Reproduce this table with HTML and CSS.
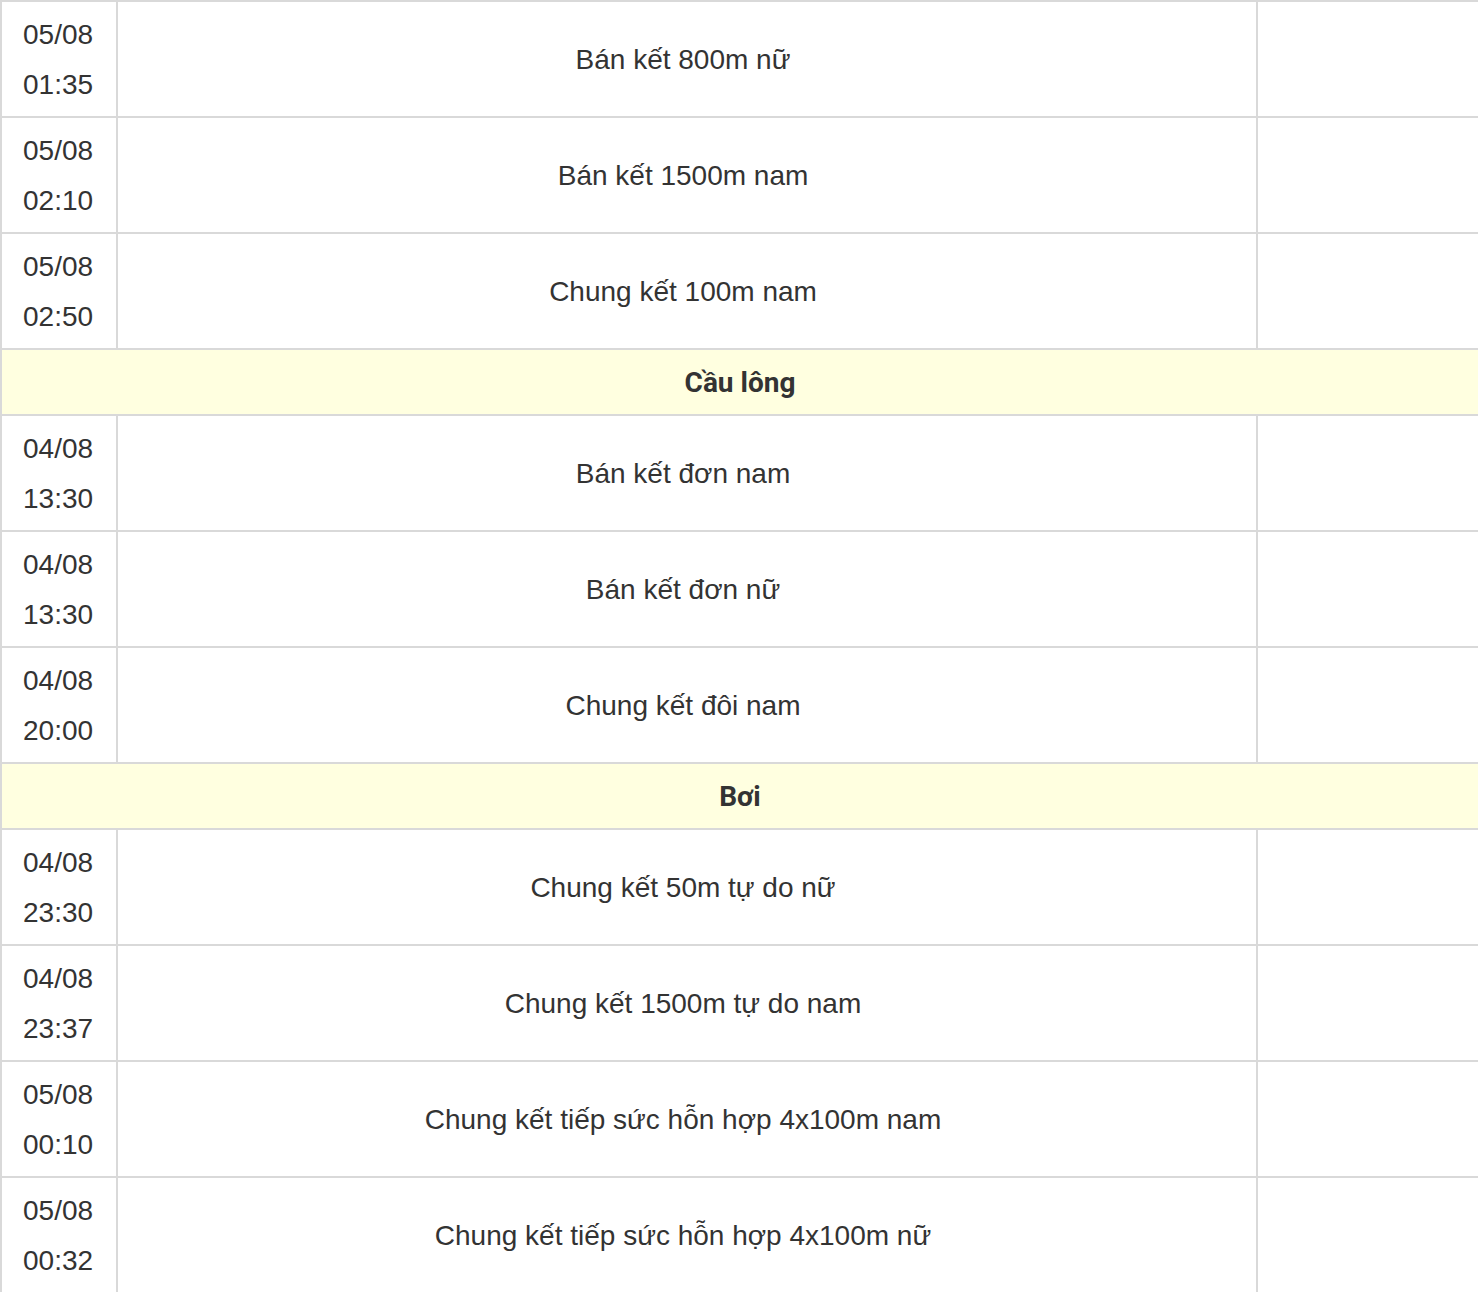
FILE: index.html
```html
<!DOCTYPE html>
<html lang="vi">
<head>
<meta charset="utf-8">
<title>Lịch thi đấu</title>
<link rel="stylesheet" href="styles.css">
</head>
<body>
<div class="schedule">
  <div class="cell time">05/08<br>01:35</div>
  <div class="cell event">Bán kết 800m nữ</div>
  <div class="cell extra"></div>

  <div class="cell time">05/08<br>02:10</div>
  <div class="cell event">Bán kết 1500m nam</div>
  <div class="cell extra"></div>

  <div class="cell time">05/08<br>02:50</div>
  <div class="cell event">Chung kết 100m nam</div>
  <div class="cell extra"></div>

  <div class="cell sport">Cầu lông</div>

  <div class="cell time">04/08<br>13:30</div>
  <div class="cell event">Bán kết đơn nam</div>
  <div class="cell extra"></div>

  <div class="cell time">04/08<br>13:30</div>
  <div class="cell event">Bán kết đơn nữ</div>
  <div class="cell extra"></div>

  <div class="cell time">04/08<br>20:00</div>
  <div class="cell event">Chung kết đôi nam</div>
  <div class="cell extra"></div>

  <div class="cell sport">Bơi</div>

  <div class="cell time">04/08<br>23:30</div>
  <div class="cell event">Chung kết 50m tự do nữ</div>
  <div class="cell extra"></div>

  <div class="cell time">04/08<br>23:37</div>
  <div class="cell event">Chung kết 1500m tự do nam</div>
  <div class="cell extra"></div>

  <div class="cell time">05/08<br>00:10</div>
  <div class="cell event">Chung kết tiếp sức hỗn hợp 4x100m nam</div>
  <div class="cell extra"></div>

  <div class="cell time">05/08<br>00:32</div>
  <div class="cell event">Chung kết tiếp sức hỗn hợp 4x100m nữ</div>
  <div class="cell extra"></div>
</div>
</body>
</html>
```

FILE: styles.css
```css
html, body {
  margin: 0;
  padding: 0;
  background: #ffffff;
}

body {
  font-family: "Liberation Sans", Arial, sans-serif;
  font-size: 28px;
  line-height: 50px;
  color: #333333;
  overflow: hidden;
}

.schedule {
  display: grid;
  grid-template-columns: 116px 1140px 1fr;
}

.cell {
  box-sizing: border-box;
  border-top: 2px solid #d9d9d9;
  border-left: 2px solid #d9d9d9;
}

.time {
  padding: 8px 21px 6px;
}

.event {
  display: flex;
  align-items: center;
  justify-content: center;
  text-align: center;
  padding: 2px 28px 0 20px;
}

.sport {
  grid-column: 1 / -1;
  background: #ffffe0;
  text-align: center;
  padding: 8px 7px 6px;
  font-family: Roboto, "Liberation Sans", sans-serif;
  font-weight: 700;
  color: #333333;
}
```
